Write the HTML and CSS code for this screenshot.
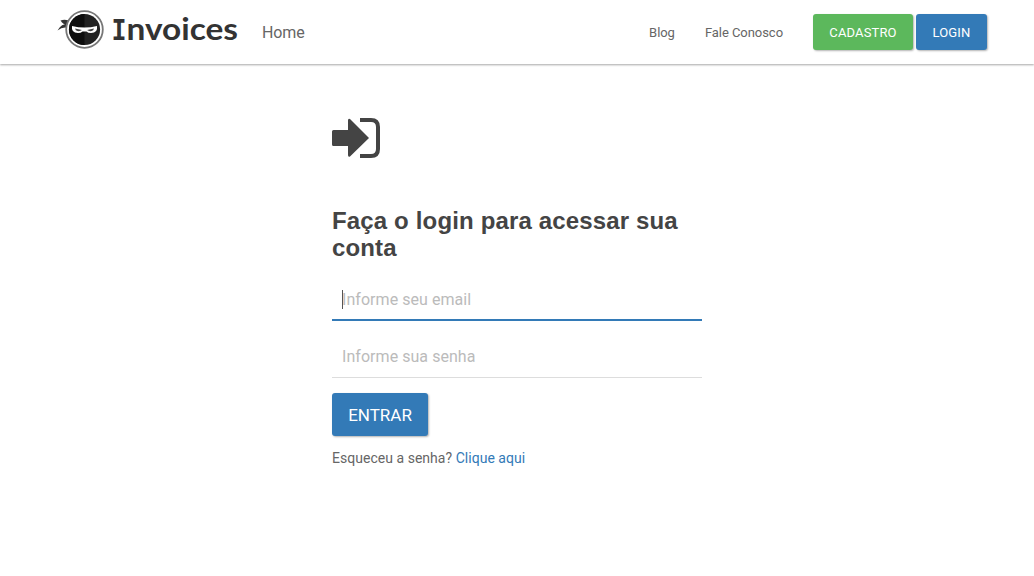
FILE: index.html
```html
<!DOCTYPE html>
<html lang="pt-BR">
<head>
<meta charset="utf-8">
<title>Invoices - Login</title>
<link rel="stylesheet" href="styles.css">
</head>
<body>
<header class="navbar">
  <a class="brand" href="#" aria-label="Invoices">
    <svg width="184" height="44" viewBox="0 0 184 44">
      <g fill="#333">
        <path d="M3.500 12.500Q9 10.500 14.500 14L12 17Q6 17 3.500 12.500Z"/>
        <path d="M.500 22.500Q4 15 13.500 15.500L11.500 20Q6 18 .500 22.500Z"/>
      </g>
      <circle cx="27.500" cy="21.500" r="18.300" fill="#fff" stroke="#777" stroke-width="1.800"/>
      <circle cx="27.500" cy="21.500" r="15.600" fill="#222"/>
      <path d="M27.500 6A15.500 15.500 0 0 0 27.500 37Z" fill="#0e0e0e"/>
      <path d="M15 18Q27.500 21 40 18Q41 25 34 25Q31 25 29.500 23.500H25.500Q24 25 21 25Q14 25 15 18Z" fill="#fff"/>
      <path d="M18 20.500L25 22Q23 23.500 20.500 23Q18.500 22.500 18 20.500ZM37 20.500L30 22Q32 23.500 34.500 23Q36.500 22.500 37 20.500Z" fill="#444"/>
      <text class="logo-initial" x="54.500" y="31.500" textLength="15" lengthAdjust="spacingAndGlyphs">I</text>
      <text class="logo-rest" x="69.500" y="31.500" textLength="111.500" lengthAdjust="spacingAndGlyphs">nvoices</text>
    </svg>
  </a>
  <a class="home" href="#">Home</a>
  <nav class="links">
    <a class="blog" href="#">Blog</a>
    <a class="contact" href="#">Fale Conosco</a>
    <a class="btn btn-success" href="#">CADASTRO</a>
    <a class="btn btn-primary" href="#">LOGIN</a>
  </nav>
</header>
<main class="login">
  <svg class="icon" width="48" height="40" viewBox="0 0 48 40">
    <path d="M1.500 12H16V2.500Q16 0 18 1L37 20L18 38.500Q16 39.500 16 37V28H1.500Q0 28 0 26.500V13.500Q0 12 1.500 12Z" fill="#444"/>
    <path d="M28 2H39Q46 2 46 9V31Q46 38 39 38H28" fill="none" stroke="#444" stroke-width="4"/>
  </svg>
  <h1>Faça o login para acessar sua conta</h1>
  <form>
    <div class="field-wrap">
      <input class="field active" type="text" placeholder="Informe seu email">
      <span class="caret"></span>
    </div>
    <input class="field" type="password" placeholder="Informe sua senha">
    <button class="btn submit" type="button">ENTRAR</button>
  </form>
  <p class="forgot">Esqueceu a senha? <a href="#">Clique aqui</a></p>
</main>
</body>
</html>
```
FILE: styles.css
```css
* { box-sizing: border-box; }
body { margin: 0; background: #fff; color: #666; font-family: Roboto, sans-serif; font-size: 14px; overflow: hidden; }
a { text-decoration: none; color: inherit; }
.navbar { display: flex; height: 64px; padding: 0 47px 0 57px; background: #fff; box-shadow: 0 1px 2px rgba(0,0,0,.35); }
.brand { height: 44px; padding-top: 8px; width: 205px; }
.brand svg { display: block; }
.logo-initial { font: bold 28px "DejaVu Sans Mono", monospace; fill: #333; }
.logo-rest { font: bold 31px Lato, sans-serif; fill: #333; }
.home { line-height: 65px; font-size: 16px; letter-spacing: -.1px; }
.links { display: flex; align-items: center; margin-left: auto; font-size: 13px; letter-spacing: -.05px; }
.blog { margin-right: 30px; }
.contact { margin-right: 30px; }
.btn { display: flex; align-items: center; justify-content: center; height: 36px; border: 0; border-radius: 3px; color: #fff; font: 13px Roboto, sans-serif; letter-spacing: .15px; box-shadow: 1px 1px 2px rgba(0,0,0,.3); }
.btn-success { width: 100px; margin-right: 3px; background: #5cb85c; }
.btn-primary { width: 71px; background: #337ab7; }
.login { width: 370px; margin: 54px auto 0; }
.icon { display: block; }
h1 { margin: 49px 0 0; font: bold 24px/27px "Liberation Sans", Arial, sans-serif; letter-spacing: .15px; color: #444; }
form { margin-top: 17px; }
.field-wrap { position: relative; }
.field { display: block; width: 100%; height: 43px; margin: 0 0 14px; padding: 0 10px; border: 0; border-bottom: 1px solid #ddd; outline: 0; background: transparent; color: #666; font: 16px Roboto, sans-serif; letter-spacing: .05px; }
.active { padding-top: 2px; border-bottom: 2px solid #337ab7; }
.field::placeholder { color: #bbb; opacity: 1; }
.caret { position: absolute; left: 10px; top: 12px; width: 1px; height: 19px; background: #555; }
.submit { width: 96px; height: 43px; margin-top: 15px; background: #337ab7; font-size: 17px; letter-spacing: 0; }
.forgot { margin: 14px 0 0; line-height: 17px; letter-spacing: .03px; }
.forgot a { color: #337ab7; }
```
